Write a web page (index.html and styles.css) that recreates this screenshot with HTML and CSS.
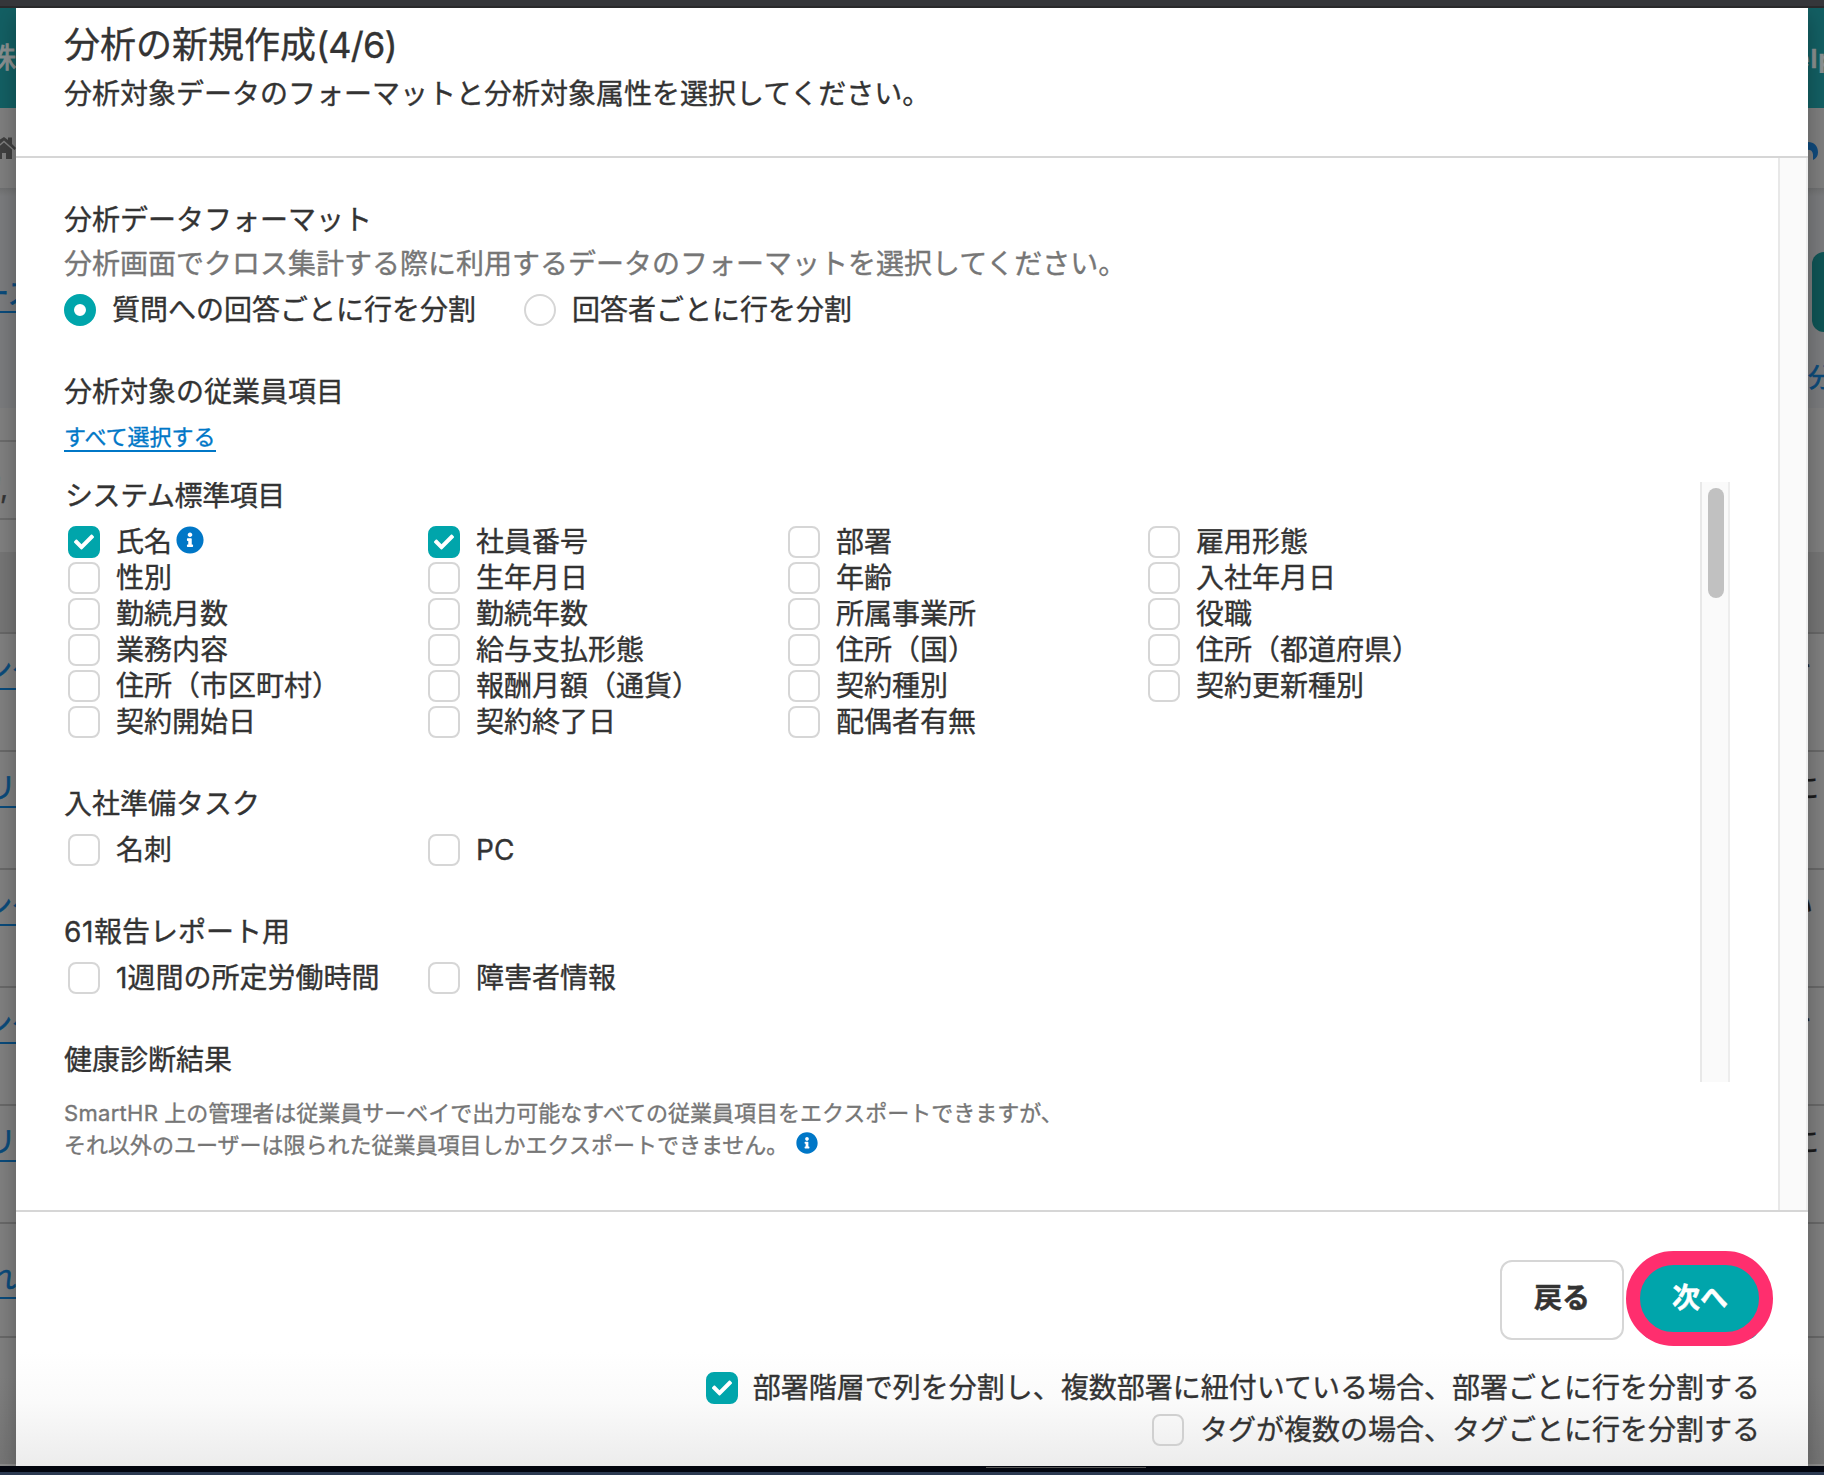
FILE: index.html
```html
<!DOCTYPE html>
<html lang="ja">
<head>
<meta charset="utf-8">
<title>分析の新規作成</title>
<link rel="stylesheet" href="styles.css">
</head>
<body>
<svg class="defs" aria-hidden="true">
  <symbol id="check" viewBox="0 0 512 512"><path d="M173.898 439.404l-166.4-166.4c-9.997-9.997-9.997-26.206 0-36.204l36.203-36.204c9.997-9.998 26.207-9.998 36.204 0L192 312.69 432.095 72.596c9.997-9.997 26.207-9.997 36.204 0l36.203 36.204c9.997 9.997 9.997 26.206 0 36.204l-294.4 294.401c-9.998 9.997-26.207 9.997-36.204-.001z"/></symbol>
  <symbol id="info" viewBox="0 0 512 512"><path d="M256 8C119.043 8 8 119.083 8 256c0 136.997 111.043 248 248 248s248-111.003 248-248C504 119.083 392.957 8 256 8zm0 110c23.196 0 42 18.804 42 42s-18.804 42-42 42-42-18.804-42-42 18.804-42 42-42zm56 254c0 6.627-5.373 12-12 12h-88c-6.627 0-12-5.373-12-12v-24c0-6.627 5.373-12 12-12h12v-64h-12c-6.627 0-12-5.373-12-12v-24c0-6.627 5.373-12 12-12h64c6.627 0 12 5.373 12 12v100h12c6.627 0 12 5.373 12 12v24z"/></symbol>
</svg>
<div class="chrome-top"></div>
<div class="stage">
  <div class="side left">
    <div class="appbar"><span>株</span></div>
    <div class="nav"><svg width="24" height="24" viewBox="0 0 24 24"><path d="M0 11L8 3.500L12 1L16 4V1.500H20V8L24 12L22.500 14L12 4.500L1 14Z"/><path d="M4 13L12 6.500L20 13.500V23H14V17H10V23H4Z"/></svg></div>
    <div class="lead"><a>ース</a></div>
    <div class="filter"></div>
    <div class="count"><span>',</span></div>
    <div class="thead"></div>
    <div class="row"><a>ンケ</a></div>
    <div class="row"><a class="ri">リ<i>ョ</i></a></div>
    <div class="row"><a>ンケ</a></div>
    <div class="row"><a>ンケ</a></div>
    <div class="row"><a class="ri">リ<i>ョ</i></a></div>
    <div class="row last"><a class="re">れ</a></div>
    <div class="rest"></div>
  </div>
  <main class="modal">
    <header class="head">
      <h1>分析の新規作成<span>(4/6)</span></h1>
      <p>分析対象データのフォーマットと分析対象属性を選択してください。</p>
    </header>
    <div class="body">
      <div class="content">
        <h2>分析データフォーマット</h2>
        <p class="desc">分析画面でクロス集計する際に利用するデータのフォーマットを選択してください。</p>
        <div class="radios">
          <label><span class="radio on"></span>質問への回答ごとに行を分割</label>
          <label><span class="radio"></span>回答者ごとに行を分割</label>
        </div>
        <h2 class="target">分析対象の従業員項目</h2>
        <a class="all">すべて選択する</a>
        <div class="scroller">
          <div class="groups">
            <section>
              <h3 class="sys">システム標準項目</h3>
              <div class="grid">
                <label><span class="box on"><svg><use href="#check"/></svg></span>氏名<svg class="info"><use href="#info"/></svg></label>
                <label><span class="box on"><svg><use href="#check"/></svg></span>社員番号</label>
                <label><span class="box"></span>部署</label>
                <label><span class="box"></span>雇用形態</label>
                <label><span class="box"></span>性別</label>
                <label><span class="box"></span>生年月日</label>
                <label><span class="box"></span>年齢</label>
                <label><span class="box"></span>入社年月日</label>
                <label><span class="box"></span>勤続月数</label>
                <label><span class="box"></span>勤続年数</label>
                <label><span class="box"></span>所属事業所</label>
                <label><span class="box"></span>役職</label>
                <label><span class="box"></span>業務内容</label>
                <label><span class="box"></span>給与支払形態</label>
                <label><span class="box"></span>住所（国）</label>
                <label><span class="box"></span>住所（都道府県）</label>
                <label><span class="box"></span>住所（市区町村）</label>
                <label><span class="box"></span>報酬月額（通貨）</label>
                <label><span class="box"></span>契約種別</label>
                <label><span class="box"></span>契約更新種別</label>
                <label><span class="box"></span>契約開始日</label>
                <label><span class="box"></span>契約終了日</label>
                <label><span class="box"></span>配偶者有無</label>
              </div>
            </section>
            <section>
              <h3>入社準備タスク</h3>
              <div class="grid">
                <label><span class="box"></span>名刺</label>
                <label><span class="box"></span>PC</label>
              </div>
            </section>
            <section>
              <h3><span class="num">61</span>報告レポート用</h3>
              <div class="grid">
                <label><span class="box"></span>1週間の所定労働時間</label>
                <label><span class="box"></span>障害者情報</label>
              </div>
            </section>
            <section>
              <h3>健康診断結果</h3>
            </section>
          </div>
          <div class="track"><div class="thumb"></div></div>
        </div>
        <p class="note"><span class="latin">SmartHR</span> 上の管理者は従業員サーベイで出力可能なすべての従業員項目をエクスポートできますが、<br>それ以外のユーザーは限られた従業員項目しかエクスポートできません。<svg class="info"><use href="#info"/></svg></p>
      </div>
      <div class="track outer"></div>
    </div>
    <footer class="foot">
      <div class="buttons">
        <button class="btn">戻る</button>
        <button class="btn next"><span>次へ</span></button>
      </div>
      <label class="opt first"><span class="box on"><svg><use href="#check"/></svg></span>部署階層で列を分割し、複数部署に紐付いている場合、部署ごとに行を分割する</label>
      <label class="opt"><span class="box"></span>タグが複数の場合、タグごとに行を分割する</label>
    </footer>
  </main>
  <div class="side right">
    <div class="appbar"><span>Help</span></div>
    <div class="nav"><svg width="10" height="18" viewBox="0 0 10 14" preserveAspectRatio="none"><path d="M0 0C6 0 10 3 10 8C10 11 8 13 5 14V9.500C4.500 7 3 6 0 6Z"/></svg></div>
    <div class="lead"><div class="cta"></div><a>分</a></div>
    <div class="filter"></div>
    <div class="count"></div>
    <div class="thead"></div>
    <div class="row"><span class="edge">き</span></div>
    <div class="row"><span>に</span></div>
    <div class="row"><span class="edge">い</span></div>
    <div class="row"><span class="edge">き</span></div>
    <div class="row"><span>に</span></div>
    <div class="row last"></div>
    <div class="rest"></div>
  </div>
</div>
<div class="chrome-bottom"><div class="glint"></div></div>
</body>
</html>
```
FILE: styles.css
```css
*, ::after { box-sizing: border-box; }
body {
  margin: 0;
  width: 1824px;
  height: 1475px;
  overflow: hidden;
  background: #7f7f7f;
  color: #333;
  font: 28px/36px Inter, "Noto Sans CJK JP", sans-serif;
  -webkit-text-stroke: .35px currentColor;
}
h1, h2, h3, p { margin: 0; font-weight: 400; }
h2, h3 { font-size: 28px; line-height: 36px; }
.defs { display: block; width: 0; height: 0; }

.chrome-top { height: 8px; background: #35363a; border-bottom: 2px solid #29292b; }
.chrome-bottom { height: 9px; background: #02050e; border-bottom: 3px solid #2c3a51; }
.glint { width: 160px; height: 1px; margin-left: 986px; background: #555; transform: translateY(1px); }

.stage { display: flex; height: 1458px; overflow: hidden; }

/* dimmed page on both sides of the dialog */
.side { width: 16px; overflow: hidden; white-space: nowrap; background: #7f7f7f; flex: none; }
.side a { color: #0a4a7a; -webkit-text-stroke-width: .7px; }
.appbar { height: 100px; background: #135f63; color: #8a9090; padding-top: 32px; }
.left .appbar span { margin-left: -12px; -webkit-text-stroke-width: 1px; }
.right .appbar { padding-top: 32px; }
.right .appbar span { margin-left: -33px; font-size: 25px; font-weight: 700; letter-spacing: 1px; }
.nav { height: 80px; background: #7e7e7e; }
.left .nav { padding: 28px 0 0; }
.left .nav svg { display: block; margin-left: -8px; fill: #3f3f3f; }
.right .nav { padding-top: 34px; }
.right .nav svg { display: block; fill: #104a7c; }
.lead { height: 220px; background: linear-gradient(#6f7071, #7a7b7d 8px); padding-top: 88px; }
.left .lead a { display: block; margin-left: -19px; height: 37px; border-bottom: 2px solid #0a4a7a; }
.right .lead { padding-top: 64px; }
.cta { width: 60px; height: 80px; margin-left: 4px; border-radius: 12px; background: #0f5455; }
.right .lead a { display: block; margin-top: 28px; font-size: 26px; }
.filter { height: 34px; border-bottom: 2px solid #6b6b6b; }
.right .filter { border-color: #7f7f7f; }
.count { height: 110px; padding-top: 28px; }
.left .count { background: linear-gradient(#7f7f7f 76px, #6b6b6b 76px, #6b6b6b 78px, #7f7f7f 78px); color: #333; }
.left .count span { margin-left: -6px; }
.thead { height: 82px; background: #757575; border-bottom: 2px solid #676767; }
.row { height: 118px; padding-top: 18px; border-bottom: 2px solid #686868; color: #1b1b1b; }
.left .row a { display: block; height: 38px; margin-left: -16px; border-bottom: 2px solid #0a4a7a; }
.left .row a.ri { margin-left: -12px; }
.left .row i { font-style: normal; }
.row.last { height: 114px; }
.left .row.last { padding-top: 37px; }
.left .row a.re { margin-left: -12px; }
.right .row span { display: block; margin-left: -17px; }
.right .row span.edge { margin-left: -23px; }
.rest { height: 128px; background: linear-gradient(#7f7f7f 30%, #757575); border-bottom: 2px solid #8b8b8b; }

/* dialog */
.modal {
  position: relative;
  width: 1792px;
  background: #fff;
  box-shadow: 0 8px 20px rgba(0, 0, 0, .28);
  display: flex;
  flex-direction: column;
  white-space: nowrap;
}
.head { height: 150px; padding: 13px 48px 0; border-bottom: 2px solid #d6d6d6; }
.head h1 { font-size: 36px; line-height: 48px; }
.head h1 span { letter-spacing: -.8px; }
.head p { margin-top: 7px; }
.body { height: 1054px; display: flex; border-bottom: 2px solid #d6d6d6; }
.content { flex: 1; padding: 44px 48px 0; }
.desc { margin-top: 8px; color: #767676; }
.radios { display: flex; gap: 48px; margin-top: 10px; }
.radios label, .grid label, .opt { display: flex; align-items: center; }
.radio { width: 32px; height: 32px; margin-right: 16px; border: 2px solid #d6d6d6; border-radius: 50%; background: #fff; }
.radio.on { border: 10px solid #00a5ab; }
.target { margin-top: 46px; }
.all { display: inline-block; vertical-align: top; width: 152px; margin-top: 12px; height: 30px; font-size: 22px; letter-spacing: 0; line-height: 30px; color: #0077c7; border-bottom: 2px solid #0077c7; }
.scroller { display: flex; justify-content: space-between; width: 1666px; height: 600px; margin-top: 30px; overflow: hidden; }
.groups section { padding-bottom: 46px; }
.groups section:first-child { margin-top: -4px; }
.sys { padding-left: 1px; letter-spacing: -.4px; }
.num { letter-spacing: .6px; }
.grid { display: grid; grid-template-columns: repeat(4, 360px); margin: 10px 0 0 4px; }
.grid label { height: 36px; }
.box { flex: none; width: 32px; height: 32px; margin-right: 16px; border: 2px solid #d6d6d6; border-radius: 8px; background: #fff; display: flex; align-items: center; justify-content: center; }
.box.on { background: #00a5ab; border-color: #00a5ab; }
.box svg { width: 20px; height: 20px; fill: #fff; }
.info { width: 28px; height: 28px; margin: -4px 0 0 4px; fill: #0077c7; }
.track { width: 30px; background: #fafafa; border: solid #e8e8e8; border-width: 0 2px; border-right-color: #ededed; padding: 6px 0 0 6px; }
.thumb { width: 16px; height: 110px; border-radius: 8px; background: #c1c1c1; }
.note { margin-top: 15px; font-size: 22px; line-height: 32px; color: #767676; }
.note .latin { letter-spacing: .3px; }
.note .info { width: 22px; height: 22px; margin: 0 0 0 8px; vertical-align: -1px; }
.foot { flex: 1; padding: 48px 48px 0; display: flex; flex-direction: column; align-items: flex-end; background: linear-gradient(#fff 55%, #fafafa 75%, #ececec); }
.buttons { display: flex; gap: 16px; }
.btn { width: 124px; height: 80px; padding: 0 0 4px; border: 2px solid #d6d6d6; border-radius: 12px; background: #fff; color: #333; font: 700 28px/36px Inter, "Noto Sans CJK JP", sans-serif; -webkit-text-stroke: .5px currentColor; }
.next { position: relative; width: 120px; border-color: #00a5ab; border-radius: 15px; background: #00a5ab; color: #fff; }
/* highlight ring drawn over the button */
.next::after { content: ""; position: absolute; left: -16px; top: -11px; width: 147px; height: 95px; border: 14px solid #ff2e6e; border-radius: 48px; }
.opt { height: 36px; margin-top: 30px; }
.opt.first .box { margin-right: 15px; }
.opt + .opt { margin-top: 6px; }
.opt .box:not(.on) { background: transparent; border-color: #d0d0d0; }
```
